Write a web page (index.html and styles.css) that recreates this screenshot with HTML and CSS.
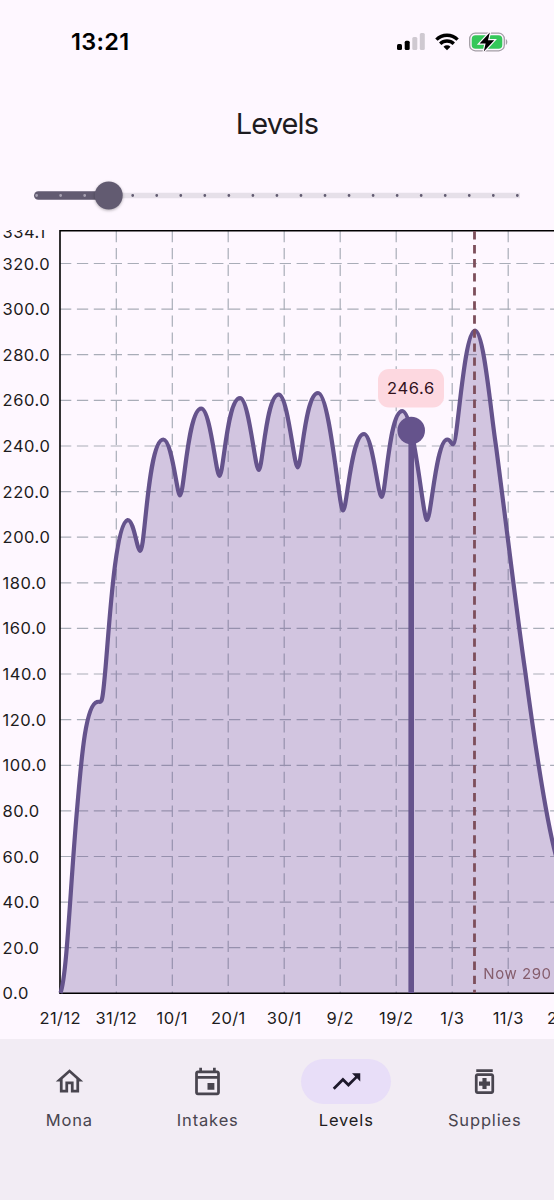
FILE: index.html
```
<!DOCTYPE html>
<html lang="en">

<head>
  <meta charset="UTF-8" />
  <meta name="viewport" content="width=device-width, initial-scale=1.0" />
  <title>Levels</title>
  <link rel="stylesheet" href="styles.css">
</head>

<body>
  <div class="status-bar">
    <div class="time">13:21</div>
    <div class="status-icons">
      <svg width="28" height="18" viewBox="0 0 28 18">
        <rect x="0" y="11" width="5" height="6" rx="1.5" />
        <rect x="7.7" y="7.8" width="5" height="9.2" rx="1.5" />
        <rect class="off" x="15.3" y="4" width="5" height="13" rx="1.5" />
        <rect class="off" x="22.8" y="0" width="5" height="17" rx="1.5" />
      </svg>
      <svg class="wifi" width="24" height="18" viewBox="0 0 24 18">
        <path d="M1.4 6.6a15.2 15.2 0 0 1 21.2 0M5.2 10.7a9.8 9.8 0 0 1 13.6 0" />
        <path class="dot" d="M12 17.3l-3.5-3.5a5 5 0 0 1 7 0z" />
      </svg>
      <svg width="39" height="20" viewBox="0 0 39 20">
        <rect class="shell" x="0.7" y="1.2" width="34.6" height="17.6" rx="5.6" />
        <rect class="charge" x="2.7" y="3.2" width="30.6" height="13.6" rx="3.8" />
        <path class="shell-cap" d="M36.8 7v6c2-.8 2-5.2 0-6z" />
        <path class="bolt" d="M20.8 .5L10.6 11.5h6L14.8 19.5 25.2 8.3h-6.2z" />
      </svg>
    </div>
  </div>

  <h1>Levels</h1>

  <svg class="slider" width="554" height="40" viewBox="0 0 554 40">
    <path class="track" d="M109 20.5H520" />
    <path class="track-active" d="M38.3 20.5H109" />
    <path class="ticks" d="M132.7 20.5H520" />
    <path class="ticks-active" d="M36.6 20.5H90" />
    <circle class="thumb" cx="108.7" cy="20.5" r="14" />
  </svg>

  <svg class="chart" width="554" height="823" viewBox="0 216 554 823">
    <defs>
      <clipPath id="labelClip">
        <rect x="0" y="230" width="60" height="790" />
      </clipPath>
    </defs>

    <path class="grid" d="M60 263.5H554M60 309.1H554M60 354.7H554M60 400.3H554M60 446H554M60 491.6H554M60 537.2H554M60 582.8H554M60 628.4H554M60 674H554M60 719.6H554M60 765.3H554M60 810.9H554M60 856.5H554M60 902.1H554M60 947.7H554" />
    <path class="grid" d="M116.3 231V993M172.3 231V993M228.2 231V993M284.2 231V993M340.2 231V993M396.2 231V993M452.2 231V993M508.2 231V993" />

    <path class="area" d="M60.5 993C67 975 70 890 77 810C81 765 85 705 97 702C99 701 101 703.5 102 699C107 680 112 524 127.7 520C134 520 137 551 140.3 551C145 551 148 439.5 163.3 439.5C172 439.5 177 495.5 180 495.5C184 495.5 188 408.5 201.2 408.5C210.5 408.5 216 476 219.5 476C223.5 476 227 398 240 398C249 398 255 470 258.7 470C262.7 470 266 394.5 278.7 394.5C288 394.5 294 467.5 297.7 467.5C301.7 467.5 305 393 318 393C330 393 339 510.5 343 510.5C347 510.5 351 434 364 434C372.5 434 378 497 381.7 497C385.7 497 389 411 402.3 411C414 411 423 520 427 520C431 520 436 439.5 447.3 439.5C451 439.5 451 445 453.5 444C457.5 443 464 330.5 475 330.5C484 330.5 491 415 496 446C507 530 517 615 525 670C535 745 545 815 556 856V993Z" />
    <path class="frame" d="M554 230.8H60V993.3H554" />
    <path class="line" d="M60.5 993C67 975 70 890 77 810C81 765 85 705 97 702C99 701 101 703.5 102 699C107 680 112 524 127.7 520C134 520 137 551 140.3 551C145 551 148 439.5 163.3 439.5C172 439.5 177 495.5 180 495.5C184 495.5 188 408.5 201.2 408.5C210.5 408.5 216 476 219.5 476C223.5 476 227 398 240 398C249 398 255 470 258.7 470C262.7 470 266 394.5 278.7 394.5C288 394.5 294 467.5 297.7 467.5C301.7 467.5 305 393 318 393C330 393 339 510.5 343 510.5C347 510.5 351 434 364 434C372.5 434 378 497 381.7 497C385.7 497 389 411 402.3 411C414 411 423 520 427 520C431 520 436 439.5 447.3 439.5C451 439.5 451 445 453.5 444C457.5 443 464 330.5 475 330.5C484 330.5 491 415 496 446C507 530 517 615 525 670C535 745 545 815 556 856" />

    <!-- selected point -->
    <path class="marker" d="M411.2 430V993" />
    <circle class="marker-dot" cx="411.2" cy="430.5" r="13.8" />

    <!-- current time -->
    <path class="now" d="M474.5 231V993" />
    <text class="now-label" x="483.3" y="979">Now 290</text>

    <rect class="tooltip" x="378" y="369" width="66" height="38.5" rx="11" />
    <text class="tooltip-text" x="411" y="394">246.6</text>

    <g class="y-labels" clip-path="url(#labelClip)">
      <text x="2.6" y="238">334.1</text>
      <text x="2.6" y="269.5">320.0</text>
      <text x="2.6" y="315.1">300.0</text>
      <text x="2.6" y="360.7">280.0</text>
      <text x="2.6" y="406.3">260.0</text>
      <text x="2.6" y="452">240.0</text>
      <text x="2.6" y="497.6">220.0</text>
      <text x="2.6" y="543.2">200.0</text>
      <text x="2.6" y="588.8">180.0</text>
      <text x="2.6" y="634.4">160.0</text>
      <text x="2.6" y="680">140.0</text>
      <text x="2.6" y="725.6">120.0</text>
      <text x="2.6" y="771.3">100.0</text>
      <text x="2.6" y="816.9">80.0</text>
      <text x="2.6" y="862.5">60.0</text>
      <text x="2.6" y="908.1">40.0</text>
      <text x="2.6" y="953.7">20.0</text>
      <text x="2.6" y="999.3">0.0</text>
    </g>

    <g class="x-labels">
      <text x="60.3" y="1024">21/12</text>
      <text x="116.3" y="1024">31/12</text>
      <text x="172.3" y="1024">10/1</text>
      <text x="228.3" y="1024">20/1</text>
      <text x="284.3" y="1024">30/1</text>
      <text x="340.3" y="1024">9/2</text>
      <text x="396.3" y="1024">19/2</text>
      <text x="452.3" y="1024">1/3</text>
      <text x="508.3" y="1024">11/3</text>
      <text x="564.3" y="1024">21/3</text>
    </g>
  </svg>

  <nav class="nav">
    <div class="nav-item">
      <div class="nav-icon">
        <svg viewBox="0 0 24 24"><path d="M12 5.69l5 4.5V18h-2v-6H9v6H7v-7.81l5-4.5M12 3L2 12h3v8h6v-6h2v6h6v-8h3L12 3z" /></svg>
      </div>
      <div>Mona</div>
    </div>
    <div class="nav-item">
      <div class="nav-icon">
        <svg viewBox="0 0 24 24"><path d="M19 4h-1V2h-2v2H8V2H6v2H5c-1.11 0-1.99.9-1.99 2L3 20c0 1.1.89 2 2 2h14c1.1 0 2-.9 2-2V6c0-1.1-.9-2-2-2zm0 16H5V10h14v10zm0-12H5V6h14v2zm-7 5h5v5h-5z" /></svg>
      </div>
      <div>Intakes</div>
    </div>
    <div class="nav-item active">
      <div class="nav-icon">
        <svg viewBox="0 0 24 24"><path d="M16 6l2.29 2.29-4.88 4.88-4-4L2 16.59 3.41 18l6-6 4 4 6.3-6.29L22 12V6z" /></svg>
      </div>
      <div>Levels</div>
    </div>
    <div class="nav-item">
      <div class="nav-icon">
        <svg viewBox="0 0 24 24"><path d="M6 3h12v2H6zM17 6H7c-1.1 0-2 .9-2 2v11c0 1.1.9 2 2 2h10c1.1 0 2-.9 2-2V8c0-1.1-.9-2-2-2zm0 13H7V8h10v11zM10.500 17.500h3V15H16v-3h-2.500V9.500h-3V12H8v3h2.500z" /></svg>
      </div>
      <div>Supplies</div>
    </div>
  </nav>
</body>

</html>
```
FILE: styles.css
```
* {
  box-sizing: border-box;
}

body {
  margin: 0;
  height: 1200px;
  display: flex;
  flex-direction: column;
  overflow: hidden;
  background: #fef7ff;
  color: #1d1b20;
  font-family: Inter, "Liberation Sans", sans-serif;
}

svg {
  display: block;
  flex-shrink: 0;
}

.status-bar {
  height: 82px;
  padding: 1px 46px 0 71px;
  display: flex;
  align-items: center;
  justify-content: space-between;
}

.time {
  font-size: 23.5px;
  font-weight: 600;
  letter-spacing: 0.3px;
  color: #000;
}

.status-icons {
  display: flex;
  align-items: center;
  gap: 10px;
}

.off {
  fill: #cfc9d1;
}

.wifi {
  fill: none;
  stroke: #000;
  stroke-width: 3.4;
}

.wifi .dot {
  fill: #000;
  stroke: none;
}

.shell {
  fill: none;
  stroke: #a39da5;
  stroke-width: 1.3;
}

.shell-cap {
  fill: #a39da5;
}

.charge {
  fill: #34c759;
}

.bolt {
  fill: #000;
  stroke: #fef7ff;
  stroke-width: 2.4;
  paint-order: stroke;
}

h1 {
  margin: 0;
  height: 93px;
  line-height: 83px;
  text-align: center;
  font-size: 29px;
  font-weight: 400;
  letter-spacing: -0.9px;
}

.slider path {
  fill: none;
}

.slider .track {
  stroke: #e6e0e9;
  stroke-width: 5.6;
}

.slider .track-active {
  stroke: #625b71;
  stroke-width: 8.6;
  stroke-linecap: round;
}

.slider .ticks,
.slider .ticks-active {
  stroke: #625b71;
  stroke-width: 2.8;
  stroke-linecap: round;
  stroke-dasharray: 0 24.04;
}

.slider .ticks-active {
  stroke: #a8a2b2;
}

.thumb {
  fill: #625b71;
  filter: drop-shadow(0 1.5px 1.5px rgba(0, 0, 0, 0.3));
}

.chart {
  margin-top: 1px;
}

.grid {
  fill: none;
  stroke: #a9adb8;
  stroke-width: 1.2;
  stroke-dasharray: 11.3 5.6;
}

.area {
  fill: rgba(103, 75, 148, 0.29);
}

.frame {
  fill: none;
  stroke: #000;
  stroke-width: 1.6;
}

.line {
  fill: none;
  stroke: #65538c;
  stroke-width: 4.2;
  stroke-linejoin: round;
}

.marker {
  stroke: #65538c;
  stroke-width: 5.6;
}

.marker-dot {
  fill: #65538c;
}

.now {
  stroke: #7d4e5b;
  stroke-width: 2.8;
  stroke-dasharray: 8.4 5.65;
}

.now-label {
  fill: #7d5260;
  opacity: 0.9;
  font-size: 15px;
  letter-spacing: 0.55px;
}

.tooltip {
  fill: #fdd8e0;
}

.tooltip-text {
  fill: #31111d;
  font-size: 16.5px;
  letter-spacing: 0.65px;
  text-anchor: middle;
}

.y-labels {
  font-size: 16.5px;
  letter-spacing: 0.5px;
  fill: #1d1b20;
}

.x-labels {
  font-size: 16.5px;
  letter-spacing: 0.4px;
  text-anchor: middle;
  fill: #1d1b20;
}

.nav {
  flex: 1;
  display: flex;
  padding-top: 20px;
  background: #f2ecf4;
}

.nav-item {
  flex: 1;
  display: flex;
  flex-direction: column;
  align-items: center;
  font-size: 16.5px;
  line-height: 22px;
  letter-spacing: 0.85px;
  color: #49454f;
}

.nav-icon {
  width: 90px;
  height: 45px;
  margin-bottom: 5px;
  display: flex;
  align-items: center;
  justify-content: center;
  border-radius: 23px;
}

.nav-icon svg {
  width: 33px;
  height: 33px;
  fill: #49454f;
}

.active {
  color: #1d1b20;
}

.active .nav-icon {
  background: #e8def8;
}

.active svg {
  fill: #1d192b;
}
```
